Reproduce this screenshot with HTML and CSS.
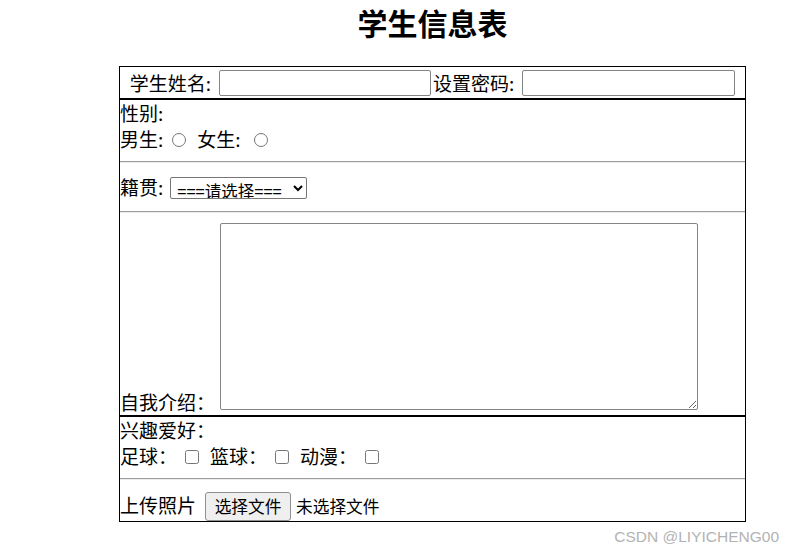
FILE: index.html
```html
<!DOCTYPE html>
<html>
<head>
  <meta charset="utf-8">
  <title>学生信息表</title>
  <link rel="stylesheet" href="styles.css">
</head>
<body>
  <div class="sheet">
    <h2 class="sheet-title">学生信息表</h2>

    <form id="studentForm">
      <!-- 账号 -->
      <div class="box box-account">
        <label for="stuName">学生姓名:</label>
        <input type="text" id="stuName" class="text-field">
        <label for="stuPwd" class="pwd-label">设置密码:</label>
        <input type="password" id="stuPwd" class="text-field text-field-pwd">
      </div>

      <!-- 基本信息 -->
      <div class="box">
        <div class="row">性别:</div>
        <div class="row">
          <span>男生:</span>
          <input type="radio" name="sex" class="radio">
          <span class="female-label">女生:</span>
          <input type="radio" name="sex" class="radio radio-female">
        </div>
        <hr class="divider">
        <div class="row row-select">
          <label for="hometown">籍贯:</label>
          <select id="hometown" class="select">
            <option>===请选择===</option>
          </select>
        </div>
        <hr class="divider">
        <div class="row row-intro">
          <label for="intro" class="intro-label">自我介绍：</label>
          <textarea id="intro" class="intro"></textarea>
        </div>
      </div>

      <!-- 爱好和照片 -->
      <div class="box">
        <div class="row">兴趣爱好：</div>
        <div class="row">
          <span>足球：</span>
          <input type="checkbox" class="check">
          <span class="hobby">篮球：</span>
          <input type="checkbox" class="check">
          <span class="hobby">动漫：</span>
          <input type="checkbox" class="check">
        </div>
        <hr class="divider">
        <div class="row row-file">
          <span>上传照片</span>
          <button type="button" class="file-btn">选择文件</button>
          <span class="file-name">未选择文件</span>
        </div>
      </div>
    </form>
  </div>

  <div class="watermark">CSDN @LIYICHENG00</div>
</body>
</html>
```

FILE: styles.css
```css
body {
  margin: 0;
  font-family: "Noto Sans CJK SC", "Noto Sans", sans-serif;
  font-size: 19px;
  color: #000;
  background: #fff;
}
.sheet {
  width: 627px;
  margin-left: 119px;
}
.sheet-title {
  margin: 0 0 22px;
  height: 44px;
  line-height: 44px;
  font-size: 30px;
  font-weight: bold;
  text-align: center;
}
.box {
  box-sizing: border-box;
  border: 1px solid #000;
}
.box-account {
  display: flex;
  align-items: center;
  justify-content: center;
  height: 33px;
}
.text-field {
  box-sizing: border-box;
  width: 212px;
  height: 26px;
  margin: 1px 0 0 8px;
  border: 1px solid #858585;
  border-radius: 2px;
  padding: 0 2px;
}
.text-field-pwd {
  width: 213px;
}
.pwd-label {
  margin-left: 2px;
}
.row {
  display: flex;
  align-items: center;
  height: 26px;
  line-height: 26px;
  white-space: nowrap;
}
.radio {
  width: 14px;
  height: 14px;
  margin: 1px 0 0 9px;
}
.female-label {
  margin-left: 11px;
}
.radio-female {
  margin-left: 13px;
}
.divider {
  margin: 9px 0;
  height: 0;
  border: 0;
  border-top: 1px solid #9d9d9d;
  border-bottom: 1px solid #ececec;
}
.row-select {
  height: 30px;
}
.select {
  box-sizing: border-box;
  width: 137px;
  height: 22px;
  margin: 1px 0 0 7px;
  padding: 0 0 0 2px;
  font-family: "Noto Sans CJK SC", sans-serif;
  font-size: 16.5px;
  border: 1px solid #767676;
  border-radius: 2px;
  background: #fff;
}
.row-intro {
  align-items: flex-end;
  height: 193px;
}
.intro {
  box-sizing: border-box;
  width: 478px;
  height: 187px;
  margin: 0 0 5px 5px;
  border: 1px solid #858585;
  border-radius: 2px;
}
.check {
  width: 14px;
  height: 14px;
  margin: 1px 0 0 8px;
}
.hobby {
  margin-left: 11px;
}
.row-file {
  height: 32px;
}
.file-btn {
  box-sizing: border-box;
  width: 86px;
  height: 29px;
  margin: 2px 0 0 9px;
  padding: 0;
  font-family: "Noto Sans CJK SC", sans-serif;
  font-size: 16.7px;
  color: #000;
  background: #efefef;
  border: 1px solid #8f8f8f;
  border-radius: 3px;
}
.file-name {
  margin: 2px 0 0 5px;
  font-size: 16.7px;
}
.watermark {
  margin-top: 6px;
  padding-right: 15px;
  text-align: right;
  font-family: "Liberation Sans", Arial, sans-serif;
  font-size: 15.5px;
  line-height: 18px;
  color: #b3b3b3;
}
```
